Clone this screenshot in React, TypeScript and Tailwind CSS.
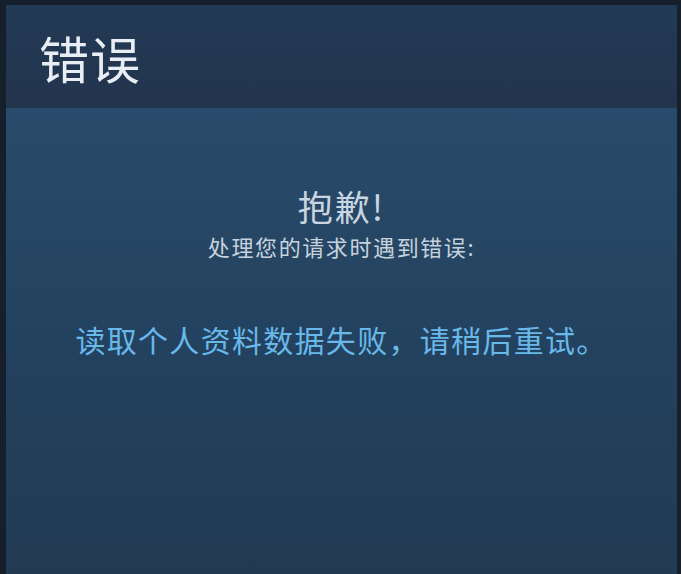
export default function App() {
  return (
    <div
      className="flex h-[574px] w-[681px] flex-col bg-[#16202c] pt-[5px] pl-[6px] pr-[4px]"
      style={{ fontFamily: '"Noto Sans CJK SC", "Noto Sans", sans-serif' }}
    >
      <div className="flex h-[103px] shrink-0 items-center bg-gradient-to-b from-[#223a55] to-[#23344d] pl-[33px]">
        <h1 className="text-[50px] leading-none font-normal tracking-[1px] text-[#e8eef4]">错误</h1>
      </div>
      <div className="flex flex-1 flex-col items-center bg-gradient-to-b from-[#294b6b] via-[#23425f] to-[#223a52] pt-[80px]">
        <p className="text-[35px] leading-none tracking-[2px] text-[#c9d6e1]">抱歉!</p>
        <p className="mt-[12px] text-[22px] leading-none tracking-[1.6px] text-[#c6d3de]">处理您的请求时遇到错误:</p>
        <p className="mt-[67px] text-[30px] leading-none tracking-[1.3px] text-[#69b8ea]">
          读取个人资料数据失败，请稍后重试。
        </p>
      </div>
    </div>
  );
}
